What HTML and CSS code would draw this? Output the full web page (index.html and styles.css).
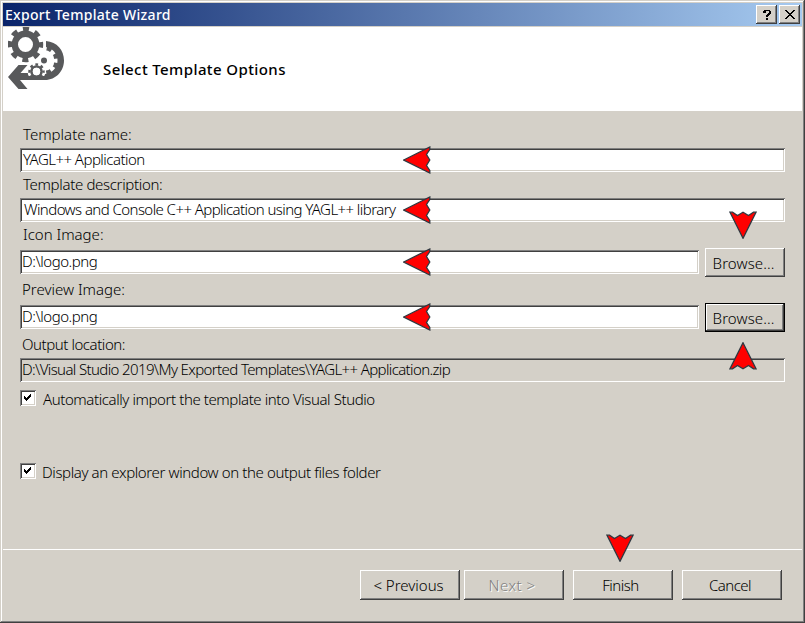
FILE: index.html
```html
<!DOCTYPE html>
<html lang="en">
<head>
<meta charset="utf-8">
<title>Export Template Wizard</title>
<link rel="stylesheet" href="styles.css">
</head>
<body>
<svg width="0" height="0" class="defs" aria-hidden="true">
  <symbol id="pointer" viewBox="0 0 28 28"><path d="M.7 14 26.800 1V3.500L23.500 8.500 26.800 14 23.500 19.500 26.800 24.500V27Z" fill="#f00" stroke="#303840" stroke-width="1.300"/></symbol>
</svg>
<div class="window">
  <header class="titlebar">
    <span class="title">Export Template Wizard</span>
    <button class="tool" aria-label="Help"><svg width="10" height="12" shape-rendering="crispEdges"><path d="M2 1h6v1h1v3H8v1H7v1H6v1H4V6h1V5h1V4h1V2H4v2H1V2h1zM4 9h2v2H4z"/></svg></button>
    <button class="tool" aria-label="Close"><svg width="10" height="10" shape-rendering="crispEdges"><path d="M0 0h2v1h1v1h1v1h2V2h1V1h1V0h2v1H9v1H8v1H7v1H6v1h1v1h1v1h1v1h1v1H8V8H7V7H6V6H4v1H3v1H2v1H0V8h1V7h1V6h1V5h1V4H3V3H2V2H1V1H0z"/></svg></button>
  </header>
  <section class="banner">
    <svg class="logo" width="58" height="63" viewBox="0 0 58 63" fill="#58595b">
      <path d="M38 14C49 15 56 23 56 33.500S48 53 37 53H12L19.500 62H10.500L0 50 10.500 38H19.500L12.500 46H38Z"/>
      <circle cx="36" cy="33.500" r="10.500" fill="#fff"/>
      <circle cx="36" cy="33.500" r="11.500" fill="none" stroke="#fff" stroke-width="4" stroke-dasharray="4.516 4.516" stroke-dashoffset="2.258"/>
      <circle cx="36" cy="33.500" r="3"/>
      <circle cx="28.500" cy="44.500" r="9" fill="#fff"/>
      <path d="M12.500 49H38V53H12.500Z"/>
      <g fill="none" stroke="#58595b">
        <circle cx="17.500" cy="17.500" r="10.700" stroke-width="6.400"/>
        <circle cx="17.500" cy="17.500" r="15.200" stroke-width="5" stroke-dasharray="6 5.938" stroke-dashoffset="3"/>
        <circle cx="28.500" cy="44.500" r="5" stroke-width="2.600"/>
        <circle cx="28.500" cy="44.500" r="7" stroke-width="2.400" stroke-dasharray="2.749 2.749" stroke-dashoffset="1.374"/>
      </g>
      <circle cx="28.500" cy="44.500" r="3.700" fill="#fff"/>
    </svg>
    <h1>Select Template Options</h1>
  </section>
  <main class="form">
    <label class="label t-name"><span>Template name:</span></label>
    <div class="field wide v-name"><span>YAGL++ Application</span></div>
    <label class="label t-desc"><span>Template description:</span></label>
    <div class="field wide v-desc"><span>Windows and Console C++ Application using YAGL++ library</span></div>
    <label class="label t-icon"><span>Icon Image:</span></label>
    <div class="field v-logo"><span>D:\logo.png</span></div>
    <button class="btn browse"><span>Browse...</span></button>
    <label class="label t-prev"><span>Preview Image:</span></label>
    <div class="field v-logo"><span>D:\logo.png</span></div>
    <button class="btn browse default"><span>Browse...</span></button>
    <label class="label t-out"><span>Output location:</span></label>
    <div class="field wide readonly v-out"><span>D:\Visual Studio 2019\My Exported Templates\YAGL++ Application.zip</span></div>
  </main>
  <section class="checks">
    <div class="check t-auto"><i class="box"><svg width="8" height="8" shape-rendering="crispEdges"><path d="M0 2h1v1h1v1h1V3h1V2h1V1h1V0h1v3H6v1H5v1H4v1H3v1H2V6H1V5H0z"/></svg></i><span>Automatically import the template into Visual Studio</span></div>
    <div class="check t-disp"><i class="box"><svg width="8" height="8" shape-rendering="crispEdges"><path d="M0 2h1v1h1v1h1V3h1V2h1V1h1V0h1v3H6v1H5v1H4v1H3v1H2V6H1V5H0z"/></svg></i><span>Display an explorer window on the output files folder</span></div>
  </section>
  <footer class="footer">
    <button class="btn previous"><span>&lt; Previous</span></button>
    <button class="btn next" disabled><span>Next &gt;</span></button>
    <button class="btn finish"><span>Finish</span></button>
    <button class="btn cancel"><span>Cancel</span></button>
  </footer>
  <svg class="pointer p1"><use href="#pointer"/></svg>
  <svg class="pointer p2"><use href="#pointer"/></svg>
  <svg class="pointer p3"><use href="#pointer"/></svg>
  <svg class="pointer p4"><use href="#pointer"/></svg>
  <svg class="pointer down p5"><use href="#pointer"/></svg>
  <svg class="pointer up p6"><use href="#pointer"/></svg>
  <svg class="pointer down p7"><use href="#pointer"/></svg>
</div>
</body>
</html>
```
FILE: styles.css
```css
* { box-sizing: border-box; }
body { margin: 0; overflow: hidden; }
.defs { position: absolute; }
.window {
  position: relative; width: 805px; height: 623px; padding: 3px;
  display: flex; flex-direction: column;
  background: #d4d0c8; color: #000;
  font: 300 15px/20px "Noto Sans", "Open Sans", sans-serif;
  box-shadow: inset -1px -1px #404040, inset 1px 1px #d4d0c8, inset -2px -2px #808080, inset 2px 2px #fff;
  white-space: nowrap;
}
button { font: inherit; color: inherit; padding: 0; border: 0; }
.titlebar {
  height: 23px; flex: none; display: flex; align-items: center; gap: 2px; padding: 0 2px;
  background: linear-gradient(90deg, #0a246a, #a6caf0);
  color: #fff; font-size: 14px; font-weight: 500;
}
.title { flex: 1; letter-spacing: .3px; }
.tool {
  width: 21px; height: 19px; display: grid; place-items: center; background: #d4d0c8;
  box-shadow: inset -1px -1px #404040, inset 1px 1px #fff, inset -2px -2px #808080;
}
.banner { display: flex; height: 84px; flex: none; margin: 1px 0 0; padding-left: 5px; background: #fff; }
.logo { flex: none; }
h1 { margin: 32px 0 0 37px; font-size: 15px; line-height: 20px; font-weight: 500; letter-spacing: .4px; }
.form {
  flex: none; display: grid; grid-template-columns: 679px 80px; column-gap: 6px;
  grid-template-rows: 24px 24px 26px 24px 28px 24px 31px 24px 29px 24px;
  padding: 13px 0 0 17px;
}
.label { grid-column: 1 / 3; padding: 0 0 0 3px; line-height: 24px; }
.t-name { line-height: 20px; }
.t-desc { letter-spacing: -.33px; }
.t-prev { line-height: 30px; padding-left: 2px; }
.t-out { line-height: 30px; padding-left: 2px; letter-spacing: -.44px; }
.field {
  height: 24px; padding-left: 2px; line-height: 22px; background: #fff;
  box-shadow: inset 1px 1px #808080, inset -1px -1px #fff, inset 2px 2px #404040, inset -2px -2px #d4d0c8;
}
.v-name { padding-left: 3px; letter-spacing: -.53px; }
.v-desc { padding-left: 4px; letter-spacing: -.57px; }
.v-logo { letter-spacing: -.45px; }
.v-out { letter-spacing: -.62px; }
.wide { grid-column: 1 / 3; }
.readonly { background: #d4d0c8; }
.btn {
  background: #d4d0c8; height: 30px; width: 100px; text-align: center; line-height: 30px;
  box-shadow: inset -1px -1px #404040, inset 1px 1px #fff, inset -2px -2px #808080;
}
.browse { width: 80px; height: 29px; margin-top: -2px; line-height: 28px; padding-right: 3px; letter-spacing: .1px; }
.default { box-shadow: inset 0 0 0 1px #000, inset -2px -2px #404040, inset 2px 2px #fff, inset -3px -3px #808080; }
.checks { flex: 1; padding: 8px 0 0 17px; }
.check { height: 73px; display: flex; align-items: flex-start; gap: 6px; }
.check span { line-height: 18px; }
.t-auto { letter-spacing: -.41px; }
.t-auto span { padding-left: 1px; }
.t-disp { letter-spacing: -.38px; }
.box {
  width: 16px; height: 16px; display: grid; place-items: center; background: #fff;
  box-shadow: inset 1px 1px #808080, inset -1px -1px #fff, inset 2px 2px #404040, inset -2px -2px #d4d0c8;
}
.footer { height: 71px; flex: none; display: flex; border-top: 1px solid #fff; padding: 20px 0 0 357px; }
.previous { padding-right: 3px; }
.next { margin: 0 9px 0 4px; padding-right: 4px; letter-spacing: .5px; color: #808080; text-shadow: 1px 1px #fff; }
.finish { margin-right: 9px; padding-right: 5px; letter-spacing: -.5px; }
.cancel { padding-right: 4px; letter-spacing: -.5px; }
.pointer { position: absolute; width: 28px; height: 28px; left: 403px; }
.down { transform: rotate(-90deg); }
.up { transform: rotate(90deg); }
.p1 { top: 146px; }
.p2 { top: 196px; }
.p3 { top: 248px; }
.p4 { top: 303px; }
.p5 { left: 729px; top: 211px; }
.p6 { left: 729px; top: 342px; }
.p7 { left: 606px; top: 534px; }
```
